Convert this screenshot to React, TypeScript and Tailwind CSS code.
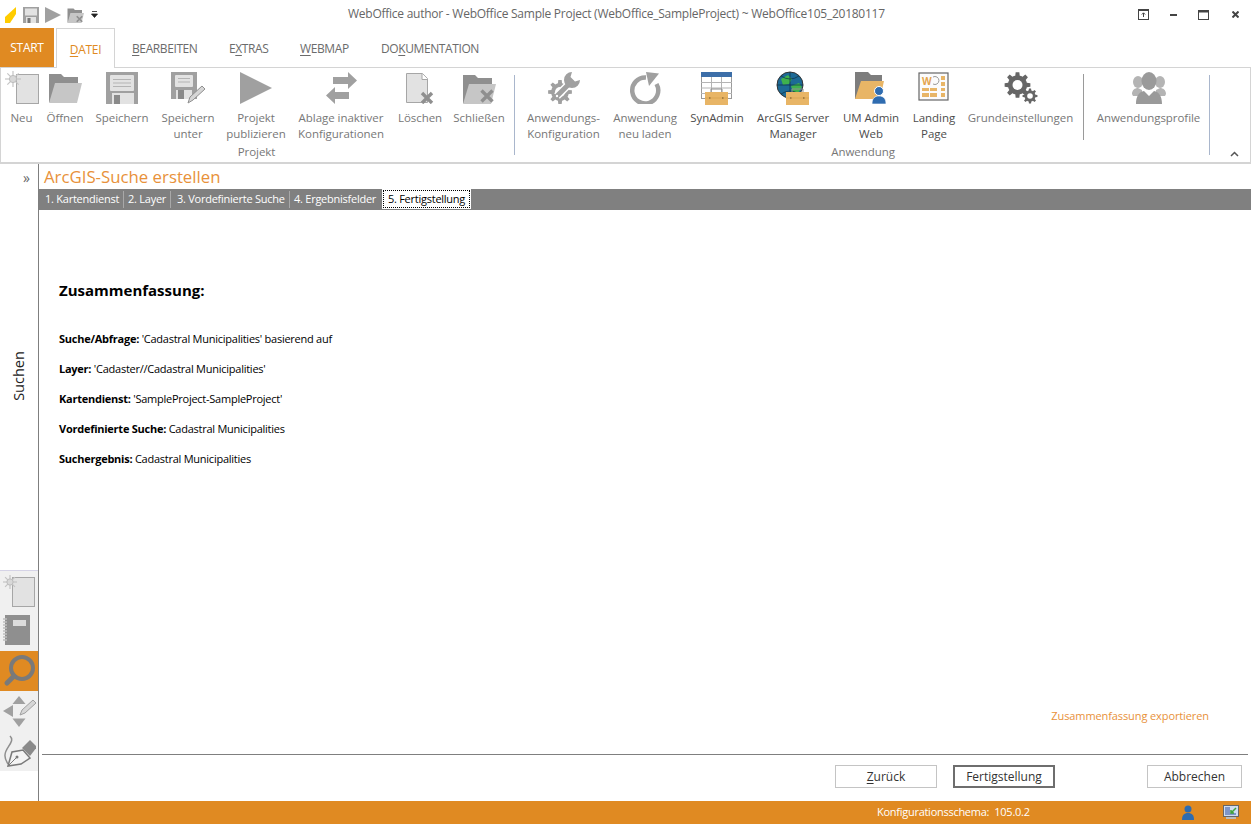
import React from 'react'

// gear outline built from teeth count
function gear(cx: number, cy: number, r: number, teeth: number) {
    const out = r
    const inner = r * 0.74
    const pts: string[] = []
    for (let i = 0; i < teeth; i++) {
        const a = (i / teeth) * Math.PI * 2
        const s = (Math.PI * 2) / teeth
        const seq: [number, number][] = [
            [inner, a - s * 0.5],
            [inner, a - s * 0.3],
            [out, a - s * 0.18],
            [out, a + s * 0.18],
            [inner, a + s * 0.3],
        ]
        seq.forEach(([d, t]) => pts.push(`${(cx + d * Math.cos(t)).toFixed(2)},${(cy + d * Math.sin(t)).toFixed(2)}`))
    }
    return `M${pts.join('L')}Z`
}

const G = '#a0a0a0'
const TOOLBOX = '#e8b566'

function Icon({ w = 34, h = 34, children }: { w?: number; h?: number; children: React.ReactNode }) {
    return (
        <svg width={w} height={h} viewBox={`0 0 ${w} ${h}`} className="block shrink-0">
            {children}
        </svg>
    )
}

function Sun({ x, y, r = 7 }: { x: number; y: number; r?: number }) {
    const rays = [0, 45, 90, 135]
    return (
        <g>
            {rays.map((a) => (
                <line key={a} x1={x - r} y1={y} x2={x + r} y2={y} stroke="#c4c4c4" strokeWidth="1.2" transform={`rotate(${a} ${x} ${y})`} />
            ))}
            <circle cx={x} cy={y} r={r * 0.45} fill="#d8d8d8" stroke="#bdbdbd" />
        </g>
    )
}

function Cross({ x, y, s = 5 }: { x: number; y: number; s?: number }) {
    return (
        <path d={`M${x - s} ${y - s}L${x + s} ${y + s}M${x + s} ${y - s}L${x - s} ${y + s}`} stroke="#8f8f8f" strokeWidth="3.4" />
    )
}

function NewIcon() {
    return (
        <Icon w={40} h={36}>
            <rect x="14.500" y="4.500" width="22" height="29" fill="#e2e2e2" stroke="#a6a6a6" />
            <Sun x={11} y={9} r={8} />
        </Icon>
    )
}

function FolderShape({ back = '#8f8f8f', front = '#c6c6c6' }: { back?: string; front?: string }) {
    return (
        <>
            <path d="M1 3h12l3 3h14v6H8L3 31H1z" fill={back} />
            <path d="M7 12h27l-5 20H1z" fill={front} />
        </>
    )
}

function OpenIcon() {
    return (
        <Icon w={34} h={36}>
            <g transform="translate(0 1)">
                <FolderShape />
            </g>
        </Icon>
    )
}

function SaveIcon() {
    return (
        <Icon w={32} h={32}>
            <path d="M0 0h32v32H0z" fill={G} />
            <rect x="4" y="3" width="24" height="16" rx="1" fill="#e2e2e2" />
            <path d="M7 7.500h18M7 11h18M7 14.500h18" stroke="#b4b4b4" strokeWidth="1" />
            <rect x="6" y="21" width="22" height="11" fill="#e2e2e2" />
            <rect x="8" y="23" width="6" height="9" fill="#8a8a8a" />
        </Icon>
    )
}

function SaveAsIcon() {
    return (
        <Icon w={34} h={32}>
            <path d="M0 0h26v27H0z" fill={G} />
            <rect x="4" y="3" width="18" height="12" rx="1" fill="#e2e2e2" />
            <path d="M7 6.500h12M7 10h12" stroke="#b4b4b4" />
            <rect x="5" y="18" width="16" height="9" fill="#e2e2e2" />
            <rect x="7" y="18" width="6" height="9" fill="#8a8a8a" />
            <path d="M17 31l2-6 12-11 3 3-12 11z" fill="#d6d6d6" stroke="#8f8f8f" />
        </Icon>
    )
}

function PlayIcon({ s = 32 }: { s?: number }) {
    return (
        <Icon w={s} h={s}>
            <polygon points={`0,0 ${s},${s / 2} 0,${s}`} fill={G} />
        </Icon>
    )
}

function ExchangeIcon() {
    return (
        <Icon w={32} h={32}>
            <path d="M8 5h15V0l9 8.500-9 8.500v-5H8z" fill={G} />
            <path d="M24 20H10v-5l-9 8.500L10 32v-5h14z" fill={G} />
        </Icon>
    )
}

function DeleteIcon() {
    return (
        <Icon w={30} h={32}>
            <path d="M1.500 1.500h16l5 5v24h-21z" fill="#e2e2e2" stroke="#a6a6a6" />
            <path d="M17 1.500v6h6" fill="#fff" stroke="#a6a6a6" />
            <Cross x={22} y={26} s={5} />
        </Icon>
    )
}

function CloseFolderIcon() {
    return (
        <Icon w={34} h={32}>
            <FolderShape />
            <Cross x={25} y={24} s={5.500} />
        </Icon>
    )
}

function ToolConfigIcon() {
    return (
        <Icon w={34} h={32}>
            <path d={gear(13, 20, 12, 8)} fill={G} />
            <circle cx="13" cy="20" r="5" fill="#fff" />
            <path d="M10 24L24 10" stroke="#fff" strokeWidth="8" />
            <path d="M10 24L24 10" stroke={G} strokeWidth="5" strokeLinecap="round" />
            <path d="M25 0A8 8 0 1 0 33 8L28 9.500 23.500 5z" fill={G} />
            <circle cx="10" cy="24" r="1.200" fill="#fff" />
        </Icon>
    )
}

function ReloadIcon() {
    return (
        <Icon w={32} h={32}>
            <path d="M17 5.500A13 13 0 1 0 27.500 12" fill="none" stroke={G} strokeWidth="4.500" />
            <path d="M17 0l13 1.500L20 14z" fill={G} />
        </Icon>
    )
}

function Toolbox({ x, y, w = 23 }: { x: number; y: number; w?: number }) {
    return (
        <g>
            <path d={`M${x + 6} ${y + 2}v-3h${w - 12}v3`} fill="none" stroke="#8f8f8f" />
            <rect x={x} y={y + 2} width={w} height="13" fill={TOOLBOX} />
            <path d={`M${x} ${y + 8}h${w}`} stroke="#d7a24f" strokeWidth="0.8" />
            <rect x={x + 4} y={y + 7} width="1.500" height="2" fill="#a67f42" />
            <rect x={x + w - 6} y={y + 7} width="1.500" height="2" fill="#a67f42" />
        </g>
    )
}

function SynAdminIcon() {
    return (
        <Icon w={34} h={34}>
            <rect x="1.500" y="1.500" width="30" height="26" fill="#fff" stroke="#9a9a9a" />
            <rect x="1" y="1" width="31" height="5" fill="#3c6ea8" />
            <path d="M1 11.500h31M1 17h31M1 22.500h31M11.500 6v22M21.500 6v22" stroke="#b4b4b4" />
            <Toolbox x={5} y={19} />
        </Icon>
    )
}

function ArcgisIcon() {
    return (
        <Icon w={34} h={34}>
            <circle cx="14" cy="14" r="13" fill="#1d6a96" stroke="#333" />
            <path d="M5 8l7-4 4 4-3 5-6 1zM15 15l8-3 3 4-4 6-5-1z" fill="#3fb24e" />
            <path d="M1 14h26M14 1v26M5 5q9 6 18 0M5 23q9-6 18 0" stroke="#0e2f44" strokeWidth="0.7" fill="none" />
            <Toolbox x={10} y={19} />
        </Icon>
    )
}

function UmAdminIcon() {
    return (
        <Icon w={34} h={34}>
            <path d="M1 1h13l3 3h11v8H8L3 28H1z" fill="#7d7d7d" />
            <path d="M7 10h23l-4 18H1z" fill={TOOLBOX} />
            <circle cx="25" cy="20" r="4.500" fill="#2f6cb0" stroke="#fff" />
            <path d="M18 33c0-6 3-8 7-8s7 2 7 8z" fill="#2f6cb0" stroke="#fff" strokeWidth="0.6" />
        </Icon>
    )
}

function LandingIcon() {
    return (
        <Icon w={32} h={32}>
            <rect x="1" y="1" width="29" height="27" fill="#fbfbfb" stroke="#666" strokeWidth="1.200" />
            <text x="4" y="13" fontSize="10" fontWeight="700" fill="#e4a44c" fontFamily="Open Sans, sans-serif">W</text>
            <path d="M15 5a4 4 0 1 1 0 7" fill="none" stroke="#9a9a9a" />
            <g fill={TOOLBOX}>
                <rect x="23" y="4" width="4" height="4" />
                <rect x="23" y="10" width="4" height="4" />
                <rect x="23" y="16" width="4" height="3" />
                <rect x="23" y="21" width="4" height="4" />
                <rect x="4" y="16" width="7" height="3" />
                <rect x="12" y="16" width="7" height="3" />
                <rect x="4" y="21" width="7" height="4" />
                <rect x="12" y="21" width="7" height="4" />
            </g>
        </Icon>
    )
}

function GearsIcon() {
    return (
        <Icon w={34} h={32}>
            <path d={gear(13.500, 13, 13, 8)} fill="#666" />
            <circle cx="13.500" cy="13" r="5" fill="#fff" />
            <path d={gear(26, 24, 7.500, 8)} fill="#666" />
            <circle cx="26" cy="24" r="2.800" fill="#fff" />
        </Icon>
    )
}

function UsersIcon() {
    return (
        <Icon w={34} h={32}>
            <ellipse cx="6" cy="10" rx="5" ry="6" fill="#b4b4b4" />
            <ellipse cx="28" cy="10" rx="5" ry="6" fill="#b4b4b4" />
            <path d="M0 22c0-4 3-6 6-6l4 2v6H1zM34 22c0-4-3-6-6-6l-4 2v6h9z" fill="#b4b4b4" />
            <ellipse cx="17" cy="9" rx="7.500" ry="9" fill="#9a9a9a" />
            <path d="M4 32c0-8 3-12 8-13l5 5 5-5c5 1 8 5 8 13z" fill="#9a9a9a" />
        </Icon>
    )
}

function RibbonButton({ width, icon, lines, dark }: { width: string; icon: React.ReactNode; lines: string[]; dark?: boolean }) {
    return (
        <div className={`flex flex-col items-center ${width}`}>
            <div className="flex h-[40px] items-center justify-center">{icon}</div>
            <div className={`mt-[2px] text-center text-[11.5px] leading-[16px] tracking-[-0.05px] whitespace-nowrap ${dark ? 'text-[#4d4d4d]' : 'text-[#777777]'}`}>
                {lines.map((l) => (
                    <div key={l}>{l}</div>
                ))}
            </div>
        </div>
    )
}

function Key({ children }: { children: string }) {
    return <span className="underline underline-offset-2">{children}</span>
}

function MenuTab({ children, className }: { children: React.ReactNode; className: string }) {
    return <div className={`pt-[2px] text-[12px] tracking-[-0.4px] whitespace-nowrap text-[#6b6b6b] ${className}`}>{children}</div>
}

function WizardTab({ label, className }: { label: string; className: string }) {
    return (
        <div className={`flex h-[17px] items-center text-[11px] tracking-[-0.25px] whitespace-nowrap text-white ${className}`}>
            {label}
        </div>
    )
}

function SummaryRow({ label, value }: { label: string; value: string }) {
    return (
        <p className="h-[30px] text-[11px] tracking-[-0.25px] leading-[18px] text-black">
            <span className="font-bold">{label}</span> {value}
        </p>
    )
}

function WindowControls() {
    return (
        <div className="flex items-center">
            <svg width="11" height="11" viewBox="0 0 11 11" className="mr-[21px]">
                <rect x="0.500" y="0.500" width="10" height="10" fill="none" stroke="#444" />
                <path d="M0 1.500h11" stroke="#444" />
                <path d="M5.500 8V4M3.800 5.500L5.500 3.800 7.200 5.500" fill="none" stroke="#444" />
            </svg>
            <div className="mr-[21px] h-[2px] w-[7px] bg-[#444]" />
            <svg width="11" height="10" viewBox="0 0 11 10" className="mr-[23px]">
                <rect x="0.500" y="0.500" width="10" height="9" fill="none" stroke="#444" />
                <rect x="0" y="0" width="11" height="2.500" fill="#444" />
            </svg>
            <svg width="7" height="7" viewBox="0 0 7 7">
                <path d="M0.500 0.500l6 6M6.500 0.500l-6 6" stroke="#444" strokeWidth="2" />
            </svg>
        </div>
    )
}

export default function App() {
    return (
        <div className="flex h-[824px] w-[1251px] flex-col overflow-hidden bg-white font-['Open_Sans',sans-serif] text-[12px]">
            {/* Title bar */}
            <header className="relative flex h-[29px] shrink-0 items-center pl-[5px]">
                <svg width="12" height="16" viewBox="0 0 12 16" className="mr-[6px]">
                    <path d="M0 16V10L11 0v7l-6 9z" fill="#ffcc00" />
                </svg>
                <div className="mr-[6px]">
                    <svg width="16" height="16" viewBox="0 0 16 16" className="block">
                        <rect width="16" height="16" fill={G} />
                        <rect x="2" y="1.500" width="12" height="7" fill="#e2e2e2" />
                        <rect x="3" y="10" width="10" height="6" fill="#e2e2e2" />
                        <rect x="4.500" y="11" width="3" height="5" fill="#777" />
                    </svg>
                </div>
                <svg width="16" height="16" viewBox="0 0 16 16" className="mr-[6px]">
                    <polygon points="0,0 16,8 0,16" fill={G} />
                </svg>
                <svg width="17" height="16" viewBox="0 0 34 32" className="mr-[7px]">
                    <FolderShape />
                    <Cross x={25} y={24} s={5.500} />
                </svg>
                <svg width="7" height="7" viewBox="0 0 7 7">
                    <path d="M1 0.500h5M0.500 3h6L3.500 6.500z" stroke="#222" strokeWidth="0.800" fill="#222" />
                </svg>
                <div className="absolute left-[348px] top-[5px] text-[12px] tracking-[-0.25px] whitespace-nowrap text-[#666666]">
                    WebOffice author - WebOffice Sample Project (WebOffice_SampleProject) ~ WebOffice105_20180117
                </div>
                <div className="ml-auto pr-[12px]">
                    <WindowControls />
                </div>
            </header>

            {/* Menu tabs */}
            <nav className="flex h-[39px] shrink-0 items-end border-b border-[#d4d4d4]">
                <div className="flex h-[39px] w-[54px] items-center justify-center bg-[#e08a22] text-[12px] tracking-[-0.3px] text-white">START</div>
                <div className="relative top-px ml-[2px] flex h-[40px] w-[59px] items-center justify-center border border-b-0 border-[#d4d4d4] bg-white pt-[2px] text-[12px] tracking-[-0.3px] text-[#e08a22]">
                    <span><Key>D</Key>ATEI</span>
                </div>
                <div className="flex h-[39px] items-center">
                    <MenuTab className="ml-[17px] w-[65px]"><Key>B</Key>EARBEITEN</MenuTab>
                    <MenuTab className="ml-[32px] w-[41px]">E<Key>X</Key>TRAS</MenuTab>
                    <MenuTab className="ml-[30px] w-[50px]"><Key>W</Key>EBMAP</MenuTab>
                    <MenuTab className="ml-[31px]">DO<Key>K</Key>UMENTATION</MenuTab>
                </div>
            </nav>

            {/* Ribbon */}
            <section className="relative flex h-[96px] shrink-0 items-start border-x border-b-[2px] border-[#d4d4d4]">
                <div className="flex flex-col">
                    <div className="flex h-[76px]">
                        <RibbonButton width="w-[41px]" icon={<NewIcon />} lines={['Neu']} />
                        <RibbonButton width="w-[46px]" icon={<OpenIcon />} lines={['Öffnen']} />
                        <RibbonButton width="w-[68px]" icon={<SaveIcon />} lines={['Speichern']} />
                        <RibbonButton width="w-[64px]" icon={<SaveAsIcon />} lines={['Speichern', 'unter']} />
                        <RibbonButton width="w-[72px]" icon={<PlayIcon />} lines={['Projekt', 'publizieren']} />
                        <RibbonButton width="w-[98px]" icon={<ExchangeIcon />} lines={['Ablage inaktiver', 'Konfigurationen']} />
                        <RibbonButton width="w-[60px]" icon={<DeleteIcon />} lines={['Löschen']} />
                        <RibbonButton width="w-[58px]" icon={<CloseFolderIcon />} lines={['Schließen']} />
                    </div>
                    <div className="pl-[4px] text-center text-[11.5px] leading-[16px] tracking-[-0.05px] text-[#777777]">Projekt</div>
                </div>
                <div className="mx-[6px] mt-[7px] h-[80px] w-px bg-[#a9b6cc]" />
                <div className="flex flex-col">
                    <div className="flex h-[76px]">
                        <RibbonButton width="w-[85px]" icon={<ToolConfigIcon />} lines={['Anwendungs-', 'Konfiguration']} />
                        <RibbonButton width="w-[78px]" icon={<ReloadIcon />} lines={['Anwendung', 'neu laden']} />
                        <RibbonButton width="w-[66px]" icon={<SynAdminIcon />} lines={['SynAdmin']} dark />
                        <RibbonButton width="w-[86px]" icon={<ArcgisIcon />} lines={['ArcGIS Server', 'Manager']} dark />
                        <RibbonButton width="w-[70px]" icon={<UmAdminIcon />} lines={['UM Admin', 'Web']} dark />
                        <RibbonButton width="w-[56px]" icon={<LandingIcon />} lines={['Landing', 'Page']} dark />
                        <RibbonButton width="w-[117px]" icon={<GearsIcon />} lines={['Grundeinstellungen']} />
                    </div>
                    <div className="pl-[126px] text-center text-[11.5px] leading-[16px] tracking-[-0.05px] text-[#777777]">Anwendung</div>
                </div>
                <div className="mx-[4px] mt-[6px] h-[66px] w-px bg-[#9a9a9a]" />
                <RibbonButton width="w-[121px]" icon={<UsersIcon />} lines={['Anwendungsprofile']} />
                <div className="mt-[7px] h-[80px] w-px bg-[#a9b6cc]" />
                <svg width="9" height="6" viewBox="0 0 9 6" className="absolute right-[11px] bottom-[5px]">
                    <path d="M1 5l3.500-3.500L8 5" fill="none" stroke="#555" strokeWidth="1.500" />
                </svg>
            </section>

            <div className="flex min-h-0 flex-1">
                {/* Left rail */}
                <aside className="flex w-[39px] shrink-0 flex-col border-r border-[#7f7f7f]">
                    <div className="h-[29px] pt-[4px] pr-[8px] text-right text-[14px] leading-[20px] text-[#666666]">»</div>
                    <div className="flex h-[377px] items-start justify-center pt-[173px]">
                        <div className="origin-center -rotate-90 text-[14.500px] leading-[20px] text-[#222222]">Suchen</div>
                    </div>
                    <div className="flex h-[201px] flex-col border-t border-[#d5d3e6] bg-[#f0f0f0]">
                        <div className="flex h-[39px] items-center justify-center">
                            <svg width="34" height="34" viewBox="0 0 34 34">
                                <rect x="10.500" y="3.500" width="22" height="29" fill="#e2e2e2" stroke="#a6a6a6" />
                                <Sun x={8} y={8} r={7} />
                            </svg>
                        </div>
                        <div className="flex h-[41px] items-center justify-start pl-[2px]">
                            <svg width="30" height="31" viewBox="0 0 30 31">
                                <rect x="3" y="0" width="25" height="30" fill="#8f8f8f" />
                                <rect x="11" y="5" width="13" height="6" fill="#dcdcdc" />
                                <path d="M1 4h4M1 7h4M1 10h4M1 13h4M1 16h4M1 19h4M1 22h4M1 25h4" stroke="#bdbdbd" strokeWidth="1.500" />
                            </svg>
                        </div>
                        <div className="flex h-[40px] items-center justify-center bg-[#e08a22]">
                            <svg width="34" height="34" viewBox="0 0 34 34">
                                <circle cx="20" cy="14" r="11" fill="none" stroke="#7a7a7a" strokeWidth="4" />
                                <path d="M12 22L5 29" stroke="#7a7a7a" strokeWidth="5" strokeLinecap="round" />
                            </svg>
                        </div>
                        <div className="flex h-[41px] items-center justify-center">
                            <svg width="34" height="34" viewBox="0 0 34 34">
                                <g fill={G}>
                                    <polygon points="17,1 23.500,9 10.500,9" />
                                    <polygon points="10.500,23.500 23.500,23.500 17,32" />
                                    <polygon points="1,16 11,10 11,22" />
                                </g>
                                <path d="M18 20l2-5 11-10 3 3-11 10z" fill="#d6d6d6" stroke="#a0a0a0" />
                            </svg>
                        </div>
                        <div className="flex h-[39px] items-center justify-center">
                            <svg width="34" height="34" viewBox="0 0 34 34">
                                <path d="M8 1c6 6-6 12-5 20 0 4 2 6 3 8" fill="none" stroke="#8f8f8f" strokeWidth="1.500" />
                                <path d="M6 31l4-14 11-2 7 8-9 6z" fill="#f4f4f4" stroke="#7a7a7a" strokeWidth="1.500" />
                                <path d="M6 31l8-8" stroke="#7a7a7a" />
                                <circle cx="15" cy="22" r="1.500" fill="#7a7a7a" />
                                <path d="M20 13l8-8 7 7-7 9z" fill="#8a8a8a" />
                            </svg>
                        </div>
                    </div>
                    <div className="flex-1" />
                </aside>

                {/* Wizard */}
                <main className="flex min-w-0 flex-1 flex-col">
                    <h1 className="h-[25px] pl-[5px] text-[16.800px] leading-[26px] font-normal text-[#e8913a]">ArcGIS-Suche erstellen</h1>
                    <div className="flex h-[21px] shrink-0 items-start bg-[#808080] pl-[1px]">
                        <WizardTab label="1. Kartendienst" className="mt-[2px] w-[84px] border-r border-[#a8a8a8] pl-[5px]" />
                        <WizardTab label="2. Layer" className="mt-[2px] w-[47px] border-r border-[#a8a8a8] pl-[4px]" />
                        <WizardTab label="3. Vordefinierte Suche" className="mt-[2px] w-[119px] border-r border-[#a8a8a8] pl-[6px]" />
                        <WizardTab label="4. Ergebnisfelder" className="mt-[2px] w-[92px] pl-[4px]" />
                        <div className="h-[20px] w-[89px] bg-white px-[1px] pt-[1px]">
                            <div className="flex h-[18px] items-center justify-center border border-dotted border-black text-[11px] tracking-[-0.25px] whitespace-nowrap text-black">5. Fertigstellung</div>
                        </div>
                    </div>
                    <div className="flex-1 pt-[68px] pl-[20px]">
                        <h2 className="mb-[28px] text-[15px] leading-[24px] font-bold text-black">Zusammenfassung:</h2>
                        <SummaryRow label="Suche/Abfrage:" value="'Cadastral Municipalities' basierend auf" />
                        <SummaryRow label="Layer:" value="'Cadaster//Cadastral Municipalities'" />
                        <SummaryRow label="Kartendienst:" value="'SampleProject-SampleProject'" />
                        <SummaryRow label="Vordefinierte Suche:" value="Cadastral Municipalities" />
                        <SummaryRow label="Suchergebnis:" value="Cadastral Municipalities" />
                    </div>
                    <div className="flex justify-end pr-[42px] pb-[30px]">
                        <span className="text-[11px] leading-[16px] tracking-[-0.1px] text-[#e8913a]">Zusammenfassung exportieren</span>
                    </div>
                    <div className="mr-[3px] ml-[3px] h-px bg-[#7f7f7f]" />
                    <div className="flex h-[46px] items-start pt-[10px] pr-[9px] pl-[796px]">
                        <button className="h-[23px] w-[102px] border border-[#c4c4c4] bg-white text-[12px] text-[#333333]"><Key>Z</Key>urück</button>
                        <button className="ml-[16px] h-[23px] w-[102px] border-2 border-[#6e6e6e] bg-white text-[12px] text-[#333333]">Fertigstellung</button>
                        <button className="ml-auto h-[23px] w-[95px] border border-[#c4c4c4] bg-white text-[12px] text-[#333333]">Abbrechen</button>
                    </div>
                </main>
            </div>

            {/* Status bar */}
            <footer className="flex h-[23px] shrink-0 items-center bg-[#e08a22] pl-[877px] text-[11px] tracking-[-0.27px] text-white">
                <span className="w-[153px] whitespace-pre">Konfigurationsschema:  105.0.2</span>
                <svg width="12" height="16" viewBox="0 0 12 16" className="ml-[152px]">
                    <circle cx="6" cy="4" r="3.500" fill="#2f6cb0" />
                    <path d="M0 15c0-5 2-7 6-7s6 2 6 7z" fill="#2f6cb0" />
                </svg>
                <svg width="16" height="15" viewBox="0 0 16 15" className="ml-[29px]">
                    <rect x="0.500" y="0.500" width="15" height="11" fill="#cfdcf0" stroke="#666" />
                    <path d="M2 3h5M2 5h5M2 7h5M2 9h11" stroke="#2f4f9f" />
                    <path d="M13 3L8 8M8 5v3h3" fill="none" stroke="#3fa33a" strokeWidth="1.500" />
                    <rect x="3" y="12" width="10" height="2" fill="#bbb" />
                </svg>
            </footer>
        </div>
    )
}
